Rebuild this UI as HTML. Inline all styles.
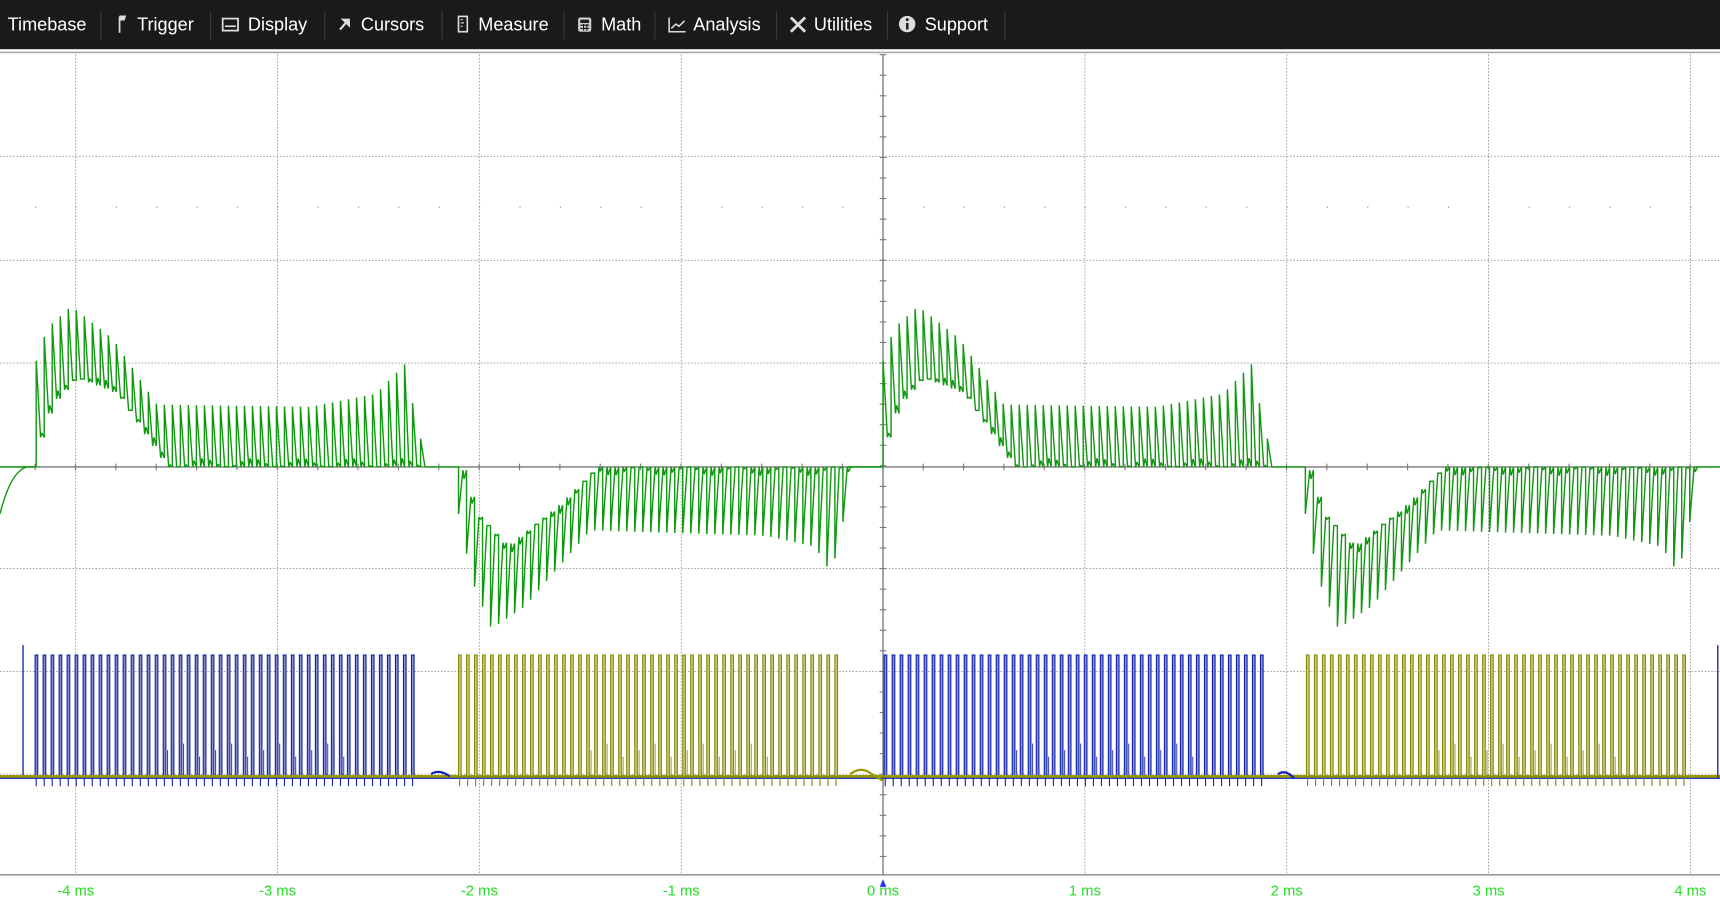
<!DOCTYPE html>
<html><head><meta charset="utf-8"><style>
html,body{margin:0;padding:0;background:#fff;overflow:hidden}
svg{display:block}
.t{font-family:"Liberation Sans",Arial,sans-serif;font-size:16.5px;fill:#fff}
.l{font-family:"Liberation Sans",Arial,sans-serif;font-size:13.5px;fill:#22dd22}
</style></head><body>
<svg id="s" width="1720" height="924" viewBox="0 0 1568 845" preserveAspectRatio="none" xmlns="http://www.w3.org/2000/svg">
<rect x="0" y="0" width="1568" height="845" fill="#fff"/>
<rect x="0" y="0" width="1568" height="45" fill="#1a1a1a"/>
<g stroke="#3a3a3a" stroke-width="1">
<line x1="92" y1="10" x2="92" y2="36"/><line x1="192" y1="10" x2="192" y2="36"/><line x1="296" y1="10" x2="296" y2="36"/><line x1="403" y1="10" x2="403" y2="36"/><line x1="514" y1="10" x2="514" y2="36"/><line x1="597" y1="10" x2="597" y2="36"/><line x1="708" y1="10" x2="708" y2="36"/><line x1="809" y1="10" x2="809" y2="36"/><line x1="916" y1="10" x2="916" y2="36"/>
</g>
<text class="t" x="7" y="28">Timebase</text>
<path d="M109 15v15M109 15h5l-1 3h-4" stroke="#ddd" stroke-width="1.6" fill="#ddd"/>
<text class="t" x="125" y="28">Trigger</text>
<rect x="203" y="17" width="14" height="11" fill="none" stroke="#ddd" stroke-width="1.6"/><line x1="205" y1="24" x2="215" y2="24" stroke="#ddd" stroke-width="1.5"/>
<text class="t" x="226" y="28">Display</text>
<path d="M310 27l6-7M313 18h5v5z" stroke="#ddd" stroke-width="2" fill="#ddd"/>
<text class="t" x="329" y="28">Cursors</text>
<rect x="418" y="15" width="8" height="14" fill="none" stroke="#ddd" stroke-width="1.5"/><path d="M420 18h2M420 21h3M420 24h2" stroke="#ddd"/>
<text class="t" x="436" y="28">Measure</text>
<rect x="527" y="16" width="12" height="13" rx="2" fill="#ccc"/><rect x="529" y="18" width="8" height="3" fill="#1a1a1a"/><path d="M529 23h8M529 26h8M532 22v6M535 22v6" stroke="#1a1a1a"/>
<text class="t" x="548" y="28">Math</text>
<path d="M610 16v13h15M612 26l4-4 3 2 5-5" stroke="#ddd" stroke-width="1.4" fill="none"/>
<text class="t" x="632" y="28">Analysis</text>
<path d="M721 16l13 13M734 16l-13 13" stroke="#ddd" stroke-width="2.6"/>
<text class="t" x="742" y="28">Utilities</text>
<circle cx="827" cy="22" r="7.5" fill="#ddd"/><rect x="826" y="21" width="2.2" height="6" fill="#1a1a1a"/><circle cx="827.1" cy="18" r="1.3" fill="#1a1a1a"/>
<text class="t" x="843" y="28">Support</text>
<line x1="0" y1="48" x2="1568" y2="48" stroke="#aaa" stroke-width="1.5"/>
<g id="grid"></g>
<g id="sig"></g>
<g id="lab">
<text class="l" x="69" y="819" text-anchor="middle">-4 ms</text>
<text class="l" x="253" y="819" text-anchor="middle">-3 ms</text>
<text class="l" x="437" y="819" text-anchor="middle">-2 ms</text>
<text class="l" x="621" y="819" text-anchor="middle">-1 ms</text>
<text class="l" x="805" y="819" text-anchor="middle">0 ms</text>
<text class="l" x="989" y="819" text-anchor="middle">1 ms</text>
<text class="l" x="1173" y="819" text-anchor="middle">2 ms</text>
<text class="l" x="1357" y="819" text-anchor="middle">3 ms</text>
<text class="l" x="1541" y="819" text-anchor="middle">4 ms</text>
</g>
<path d="M802 811l3-7 3 7z" fill="#2233ff"/>
</svg>
<script>
var NS="http://www.w3.org/2000/svg";
function el(p,t,a){var e=document.createElementNS(NS,t);for(var k in a)e.setAttribute(k,a[k]);p.appendChild(e);return e;}
var g=document.getElementById('grid'),sg=document.getElementById('sig');
var vx=[69,253,437,621,989,1173,1357,1541];
vx.forEach(function(x){el(g,'line',{x1:x,y1:50,x2:x,y2:800,stroke:'#999','stroke-width':0.8,'stroke-dasharray':'1.5 1.5'});});
[143,238,332,520,614,708].forEach(function(y){el(g,'line',{x1:0,y1:y,x2:1568,y2:y,stroke:'#999','stroke-width':0.8,'stroke-dasharray':'1.5 1.5'});});
el(g,'line',{x1:0,y1:800,x2:1568,y2:800,stroke:'#888','stroke-width':1.2});
el(g,'line',{x1:0,y1:427,x2:1568,y2:427,stroke:'#777','stroke-width':1.2});
el(g,'line',{x1:805,y1:50,x2:805,y2:800,stroke:'#777','stroke-width':1.2});
for(var x=32;x<1568;x+=36.8){el(g,'rect',{x:x,y:189,width:1,height:1,fill:'#888'});el(g,'line',{x1:x,y1:424,x2:x,y2:430,stroke:'#777'});}
for(var y=50;y<800;y+=18.8){el(g,'line',{x1:802,y1:y,x2:808,y2:y,stroke:'#777'});}
function lerp(pts,x){for(var i=0;i<pts.length-1;i++){if(x<=pts[i+1][0]){var a=pts[i],b=pts[i+1];return a[1]+(b[1]-a[1])*(x-a[0])/(b[0]-a[0]);}}return pts[pts.length-1][1];}
var P=7.3;
function green(off){
 var d='';
 var posT=[[0,330],[10,300],[32,280],[70,310],[110,370],[250,372],[310,360],[337,332],[345,380],[357,427]];
 var posB=[[0,400],[10,370],[32,345],[70,360],[115,427],[330,427],[357,427]];
 var negB=[[0,470],[12,530],[30,575],[60,555],[90,520],[120,485],[280,490],[325,500],[340,525],[352,470]];
 var negT=[[0,430],[12,470],[40,500],[90,460],[122,427],[340,427],[352,427]];
 var x0=off+33;
 d+='M'+(off-0)+' '+(427)+' L'+x0+' 427';
 for(var t=0;t<357;t+=P){
  var x=x0+t;
  d+=' L'+(x).toFixed(1)+' '+lerp(posT,t).toFixed(1)+' L'+(x+P*0.55).toFixed(1)+' '+lerp(posB,t).toFixed(1)+' L'+(x+P*0.7).toFixed(1)+' '+(lerp(posB,t)-8*(Math.sin(t)*0.5+0.5)).toFixed(1)+' L'+(x+P).toFixed(1)+' '+lerp(posB,t).toFixed(1);
 }
 d+=' L'+(x0+358)+' 427 L'+(off+418)+' 427';
 var x1=off+418;
 for(var t=0;t<352;t+=P){
  var x=x1+t;
  d+=' L'+(x).toFixed(1)+' '+lerp(negB,t).toFixed(1)+' L'+(x+P*0.55).toFixed(1)+' '+lerp(negT,t).toFixed(1)+' L'+(x+P*0.7).toFixed(1)+' '+(lerp(negT,t)+8*(Math.cos(t)*0.5+0.5)).toFixed(1)+' L'+(x+P).toFixed(1)+' '+lerp(negT,t).toFixed(1);
 }
 d+=' L'+(x1+355)+' 427 L'+(off+805)+' 427';
 return d;
}
el(sg,'path',{d:'M0 470 Q10 430 25 427 L33 427',fill:'none',stroke:'#119911','stroke-width':1.3});
el(sg,'path',{d:green(0),fill:'none',stroke:'#119911','stroke-width':1.3,'stroke-linejoin':'bevel'});
el(sg,'path',{d:green(772),fill:'none',stroke:'#119911','stroke-width':1.3,'stroke-linejoin':'bevel'});
function pulses(a,b,col,fill){
 var i=0;
 for(var x=a;x<b;x+=P,i++){
  el(sg,'rect',{x:x.toFixed(1),y:599,width:2.4,height:111,fill:fill,stroke:col,'stroke-width':1});
  el(sg,'line',{x1:x+1,y1:710,x2:x+1,y2:719,stroke:col,'stroke-width':1});
  if(i>15&&i<40&&i%2==0) el(sg,'line',{x1:x+4,y1:680+(i%3)*6,x2:x+4,y2:710,stroke:col,'stroke-width':0.8});
 }
}
el(sg,'line',{x1:0,y1:711,x2:1568,y2:711,stroke:'#1122bb','stroke-width':2.5});
pulses(32,378,'#1122aa','#8890cc');
pulses(806,1151,'#1122aa','#8890cc');
el(sg,'line',{x1:21,y1:590,x2:21,y2:711,stroke:'#1122aa','stroke-width':1.2});
el(sg,'line',{x1:0,y1:710,x2:1568,y2:710,stroke:'#999900','stroke-width':2.5});
pulses(418,763,'#888800','#c9c98a');
pulses(1191,1538,'#888800','#c9c98a');
el(sg,'path',{d:'M775 708 Q785 700 795 708 L805 714',fill:'none',stroke:'#999900','stroke-width':2});
el(sg,'path',{d:'M393 708 Q400 703 410 710 M1165 708 Q1172 703 1180 712',fill:'none',stroke:'#1122bb','stroke-width':2});
el(sg,'line',{x1:1566,y1:590,x2:1566,y2:711,stroke:'#1122aa','stroke-width':1.2});
</script>
</body></html>
